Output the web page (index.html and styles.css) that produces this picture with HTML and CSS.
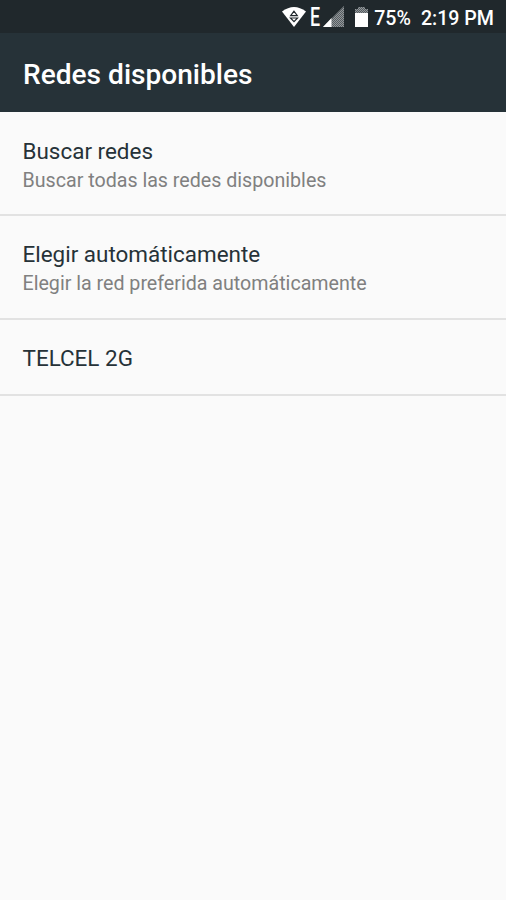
FILE: index.html
```html
<!DOCTYPE html>
<html lang="es">
<head>
<meta charset="utf-8">
<title>Redes disponibles</title>
<link rel="stylesheet" href="styles.css">
</head>
<body>
<div class="status">
  <svg class="wifi" width="24" height="20" viewBox="0 0 24 20"><path fill="#fff" d="M0 4.5Q12-4.5 24 4.5L12 20Z"/><path fill="none" stroke="#20282c" stroke-width="1.2" d="M12 4.2L8.7 8.6h6.6zM8.5 11h7L12 14.6z"/></svg>
  <span class="edge">E</span>
  <svg class="signal" width="21" height="21" viewBox="0 0 21 21">
    <defs><pattern id="dots" width="2" height="2" patternUnits="userSpaceOnUse"><path fill="#555c60" d="M0 0h2v2H0z"/><path fill="#92979a" d="M0 0h1v1H0zM1 1h1v1H1z"/></pattern></defs>
    <path fill="url(#dots)" d="M21 0v21H0z"/><path fill="#fff" d="M8.5 12v9H0z"/></svg>
  <svg class="battery" width="13" height="20" viewBox="0 0 13 20"><path fill="url(#dots)" d="M3 0h7v2h3v4H0V2h3z"/><path fill="#fff" d="M0 6h13v14H0z"/></svg>
  <span class="percent">75%</span>
  <span class="time">2:19 PM</span>
</div>
<header class="header"><h1 class="title">Redes disponibles</h1></header>
<main class="list">
  <section class="item"><div class="name">Buscar redes</div><div class="summary">Buscar todas las redes disponibles</div></section>
  <section class="item second"><div class="name">Elegir automáticamente</div><div class="summary">Elegir la red preferida automáticamente</div></section>
  <section class="item single"><div class="name">TELCEL 2G</div></section>
</main>
</body>
</html>
```
FILE: styles.css
```css
* { box-sizing: border-box; }
body { margin: 0; height: 900px; background: #fafafa; font-family: Roboto, sans-serif; overflow: hidden; }
.status { height: 33px; background: #20282c; color: #fff; display: flex; align-items: center; padding: 2px 12px 0 0; justify-content: flex-end; font-size: 19.6px; font-weight: 500; line-height: 32px; }
.wifi { margin-top: -1px; }
.edge { width: 9px; margin: -1px 4px 0 4px; font-size: 25.5px; font-weight: 500; transform: scaleX(.7); transform-origin: left; }
.signal { margin-top: -2px; }
.battery { margin: -2px 6px 0 11px; }
.percent, .time { padding-top: 2px; }
.time { margin-left: 10px; }
.header { height: 79px; background: #263238; display: flex; align-items: center; padding: 4px 23px 0; }
.title { margin: 0; color: #fff; font-size: 28.1px; font-weight: 500; line-height: 36px; }
.item { height: 104px; border-bottom: 2px solid #e2e2e2; padding: 25px 22.5px 0; }
.item.second { padding-top: 24px; }
.item.single { height: 76px; padding-top: 24px; }
.name { font-size: 22.45px; line-height: 29px; color: #263238; }
.summary { font-size: 19.65px; line-height: 29px; color: #808080; }
```
